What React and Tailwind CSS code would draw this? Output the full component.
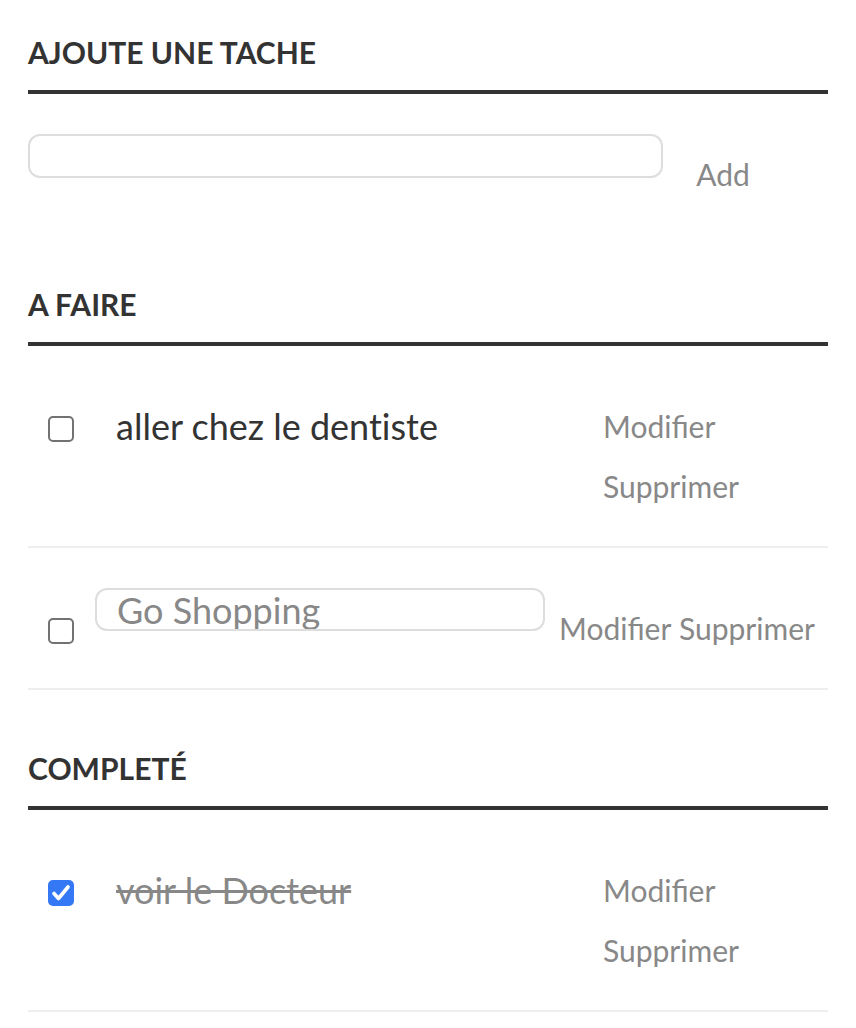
import React from 'react';

const Checkbox = ({ checked }) => {
  if (checked) {
    return (
      <span className="mx-5 mt-[30px] flex h-[26px] w-[26px] shrink-0 items-center justify-center rounded-[5px] bg-[#3478f6]">
        <svg width="26" height="26" viewBox="0 0 26 26">
          <polyline
            points="6,13.5 10.5,18.5 20,7"
            fill="none"
            stroke="#fff"
            strokeWidth="3.6"
            strokeLinecap="round"
            strokeLinejoin="round"
          />
        </svg>
      </span>
    );
  }
  return (
    <span className="mx-5 mt-[30px] block h-[26px] w-[26px] shrink-0 rounded-[5px] border-2 border-[#727272] bg-white" />
  );
};

const ActionButton = ({ children }) => (
  <button
    type="button"
    className="mt-5 h-10 w-[120px] shrink-0 whitespace-nowrap pl-[14px] text-left text-[30px] leading-[40px] text-[#888]"
  >
    {children}
  </button>
);

const Heading = ({ first, children }) => (
  <h3
    className={
      (first ? 'pt-[34px] ' : 'pt-[60px] ') +
      'border-b-4 border-[#333] pb-5 text-[30px] font-bold leading-[36px] text-[#333]'
    }
  >
    {children}
  </h3>
);

// task shown with its label, buttons stacked in a column
const TaskRow = ({ text, done }) => (
  <li className="flex items-start border-b-2 border-[#eee] py-10">
    <Checkbox checked={done} />
    <label
      className={
        'block w-[495px] shrink-0 pl-[22px] text-[36px] leading-[80px] [font-variant-ligatures:none] ' +
        (done ? 'text-[#888] line-through' : 'text-[#333]')
      }
    >
      {text}
    </label>
    <div className="flex flex-col">
      <ActionButton>Modifier</ActionButton>
      <ActionButton>Supprimer</ActionButton>
    </div>
  </li>
);

// task in edit mode: text input, buttons side by side
const EditRow = ({ text }) => (
  <li className="flex items-start border-b-2 border-[#eee] py-10">
    <Checkbox checked={false} />
    <input
      type="text"
      defaultValue={text}
      className="ml-px h-[43px] w-[450px] shrink-0 rounded-[12px] border-2 border-[#ddd] bg-white px-5 text-[36px] leading-[36px] text-[#888] outline-none"
    />
    <ActionButton>Modifier</ActionButton>
    <ActionButton>Supprimer</ActionButton>
  </li>
);

const App = () => {
  return (
    <div className="min-h-screen bg-white font-[Lato,sans-serif] text-[#333]">
      <div className="mx-auto w-[800px]">
        <Heading first>AJOUTE UNE TACHE</Heading>
        <div className="mb-8 mt-10 flex items-start">
          <input
            type="text"
            className="h-[44px] w-[635px] shrink-0 rounded-[12px] border-2 border-[#ddd] bg-white px-5 text-[36px] text-[#888] outline-none"
          />
          <button
            type="button"
            className="mt-5 h-10 w-[120px] text-center text-[30px] leading-[40px] text-[#888]"
          >
            Add
          </button>
        </div>

        <Heading>A FAIRE</Heading>
        <ul>
          <TaskRow text="aller chez le dentiste" />
          <EditRow text="Go Shopping" />
        </ul>

        <Heading>COMPLETÉ</Heading>
        <ul>
          <TaskRow text="voir le Docteur" done />
        </ul>
      </div>
    </div>
  );
};

export default App;
